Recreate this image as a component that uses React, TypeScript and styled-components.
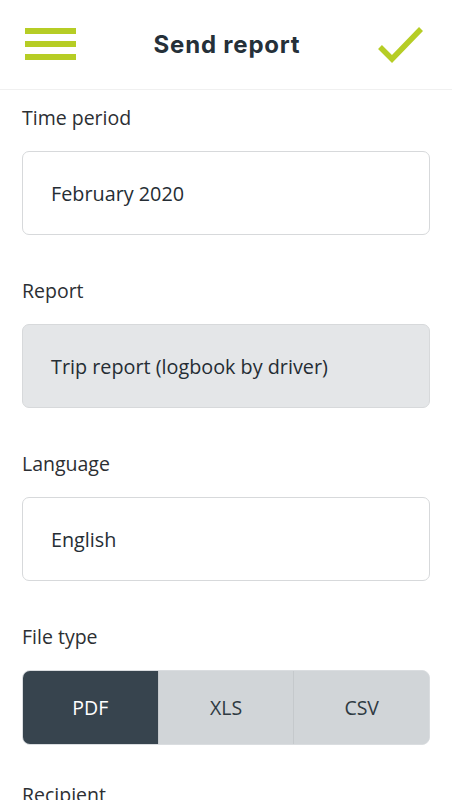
import React from "react";
import styled, { createGlobalStyle } from "styled-components";

const Global = createGlobalStyle`
  html, body { margin: 0; padding: 0; background: #ffffff; }
  body { font-family: "Open Sans", "Liberation Sans", sans-serif; overflow: hidden; }
  * { box-sizing: border-box; }
`;

const Page = styled.div`
  width: 452px;
  height: 800px;
  overflow: hidden;
  background: #fff;
`;

const Header = styled.header`
  height: 90px;
  display: flex;
  align-items: center;
  justify-content: space-between;
  padding: 0 28px 0 25px;
  border-bottom: 1px solid #f0f0f0;
`;

const Title = styled.h1`
  margin: 0;
  font-family: "Inter", "Open Sans", sans-serif;
  font-weight: 700;
  font-size: 24px;
  color: #253039;
  letter-spacing: 0.8px;
`;

const IconButton = styled.button`
  border: 0;
  background: none;
  padding: 0;
  display: flex;
  align-items: center;
  cursor: pointer;
`;

const Content = styled.main`
  padding: 16px 22px 0 22px;
  display: flex;
  flex-direction: column;
`;

const Field = styled.section<{ $gap?: number }>`
  display: flex;
  flex-direction: column;
  gap: 21px;
  margin-bottom: ${(p) => p.$gap ?? 44}px;
`;

const Label = styled.div`
  font-size: 19.5px;
  line-height: 24px;
  color: #2c2f33;
`;

const Box = styled.div<{ $disabled?: boolean }>`
  height: 84px;
  border: 1px solid #d7d9db;
  border-radius: 7px;
  background: ${(p) => (p.$disabled ? "#e4e6e8" : "#ffffff")};
  display: flex;
  align-items: center;
  padding-left: 28px;
  font-size: 19.8px;
  color: #252d34;
`;

const Segmented = styled.div`
  height: 75px;
  display: flex;
  border-radius: 8px;
  overflow: hidden;
  background: #d1d5d8;
  border: 1px solid #dadde0;
`;

const Segment = styled.div<{ $active?: boolean }>`
  flex: 1;
  display: flex;
  align-items: center;
  justify-content: center;
  font-size: 19.5px;
  color: ${(p) => (p.$active ? "#ffffff" : "#2f3a42")};
  background: ${(p) => (p.$active ? "#37444e" : "#d1d5d8")};
  border-left: 1px solid ${(p) => (p.$active ? "#37444e" : "#c5c9cc")};
  &:first-child { border-left: 0; }
`;

const GREEN = "#b6cd25";

export default function App() {
  return (
    <Page>
      <Global />
      <Header>
        <IconButton aria-label="menu">
          <svg width="51" height="34" viewBox="0 0 51 34">
            <rect x="0" y="0" width="51" height="6" fill={GREEN} />
            <rect x="0" y="13" width="51" height="6" fill={GREEN} />
            <rect x="0" y="26" width="51" height="6" fill={GREEN} />
          </svg>
        </IconButton>
        <Title>Send report</Title>
        <IconButton aria-label="confirm">
          <svg width="46" height="36" viewBox="0 0 46 36">
            <polyline points="2,20 14,32 43,2" fill="none" stroke={GREEN} strokeWidth="5.5" />
          </svg>
        </IconButton>
      </Header>
      <Content>
        <Field>
          <Label>Time period</Label>
          <Box>February 2020</Box>
        </Field>
        <Field>
          <Label>Report</Label>
          <Box $disabled>Trip report (logbook by driver)</Box>
        </Field>
        <Field>
          <Label>Language</Label>
          <Box>English</Box>
        </Field>
        <Field $gap={38}>
          <Label>File type</Label>
          <Segmented>
            <Segment $active>PDF</Segment>
            <Segment>XLS</Segment>
            <Segment>CSV</Segment>
          </Segmented>
        </Field>
        <Field>
          <Label>Recipient</Label>
        </Field>
      </Content>
    </Page>
  );
}
